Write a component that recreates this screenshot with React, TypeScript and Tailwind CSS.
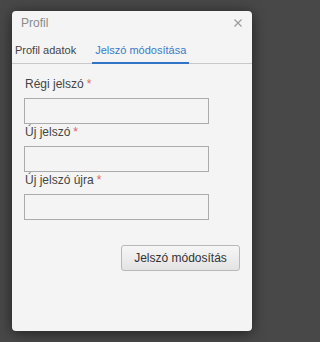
import React from "react"

const font = { fontFamily: '"Liberation Sans", Arial, sans-serif' }

function Field({ label }: { label: string }) {
  return (
    <div className="flex flex-col">
      <label className="mb-[6px] h-[16px] pl-px text-[12px] leading-[16px] text-[#444]">
        {label}
        <span className="ml-[3px] text-[#e06666]">*</span>
      </label>
      <input
        type="password"
        className="h-[26px] w-[185px] border border-[#ababab] bg-[#f4f4f4] outline-none"
      />
    </div>
  )
}

export default function App() {
  return (
    <div className="h-screen min-h-[342px] w-full overflow-hidden bg-[#484848] pl-[12px] pt-[11px]" style={font}>
      <div className="flex h-[320px] w-[240px] flex-col rounded-[4px] bg-[#f4f4f4] shadow-[0_2px_14px_rgba(0,0,0,0.55)]">
        {/* Title */}
        <div className="relative h-[25px] pl-[9px] pt-[4px]">
          <span className="block text-[12px] leading-[16px] text-[#8a8a8a]">Profil</span>
          <button className="absolute right-[10px] top-[8px] h-[8px] w-[8px]">
            <svg width="8" height="8" viewBox="0 0 8 8" className="block">
              <path d="M0.5 0.5L7.5 7.5M7.5 0.5L0.5 7.5" stroke="#9a9a9a" strokeWidth="1.2" />
            </svg>
          </button>
        </div>

        {/* Tabs */}
        <div className="flex h-[28px] gap-[13px] border-b border-[#c8c8c8]">
          <div className="h-[28px] px-[3px] pt-[7px] text-[11px] leading-[14px] text-[#444]">Profil adatok</div>
          <div className="-mb-px h-[28px] border-b-2 border-[#2f74c6] px-[3px] pt-[7px] text-[11px] leading-[14px] text-[#3a7bc8]">
            Jelszó módosítása
          </div>
        </div>

        {/* Form */}
        <div className="flex flex-col px-[12px] pt-[12px]">
          <Field label="Régi jelszó" />
          <Field label="Új jelszó" />
          <Field label="Új jelszó újra" />
          <div className="mt-[25px] flex justify-end">
            <button className="h-[26px] w-[119px] rounded-[3px] border border-[#b8b8b8] bg-gradient-to-b from-[#f6f6f6] to-[#e3e3e3] text-[12px] text-[#333]">
              Jelszó módosítás
            </button>
          </div>
        </div>
      </div>
    </div>
  )
}
